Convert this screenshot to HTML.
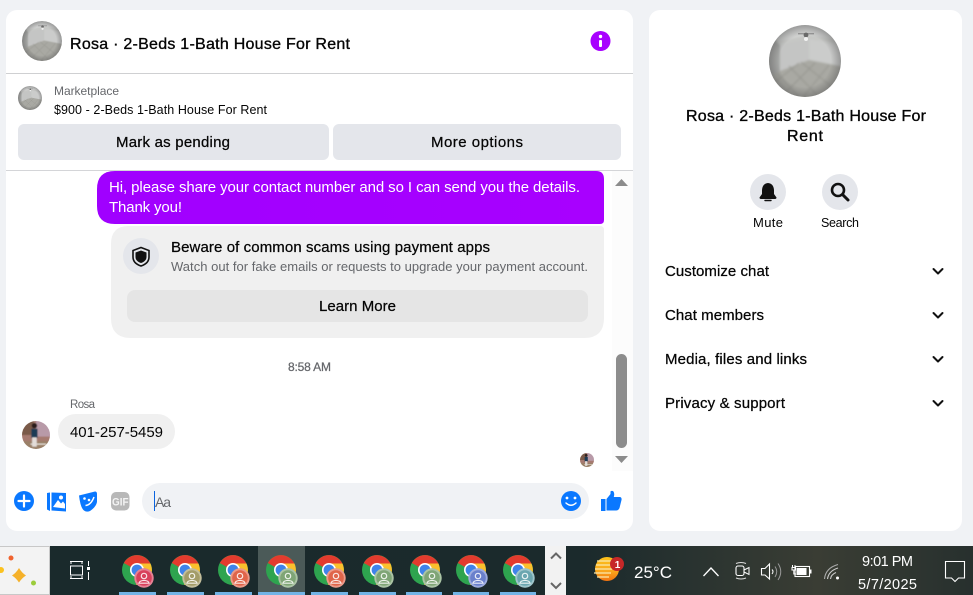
<!DOCTYPE html>
<html><head><meta charset="utf-8"><style>
html,body{margin:0;padding:0;background:#f0f2f5;width:973px;height:595px;overflow:hidden}
svg{display:block}
text{font-family:"Liberation Sans",sans-serif;fill:#050505}
.b{stroke:#050505;stroke-width:.35}
.m{stroke:#050505;stroke-width:.25}
.g{fill:#65676b}
</style></head><body>
<svg width="973" height="595" viewBox="0 0 973 595" xmlns="http://www.w3.org/2000/svg">
<defs>
<linearGradient id="bg" x1="0" x2="1" y1="0" y2="0"><stop offset="0" stop-color="#1a2a2c"/><stop offset=".6" stop-color="#1b2a2c"/><stop offset=".84" stop-color="#3a3d34"/><stop offset="1" stop-color="#27302e"/></linearGradient>
<linearGradient id="pur" x1="0" x2="1" y1="0" y2="0"><stop offset="0" stop-color="#a000ff"/><stop offset="1" stop-color="#a800ff"/></linearGradient>
<linearGradient id="sun" x1="0" x2="0" y1="0" y2="1"><stop offset="0" stop-color="#fcc21b"/><stop offset=".6" stop-color="#f9a61c"/><stop offset="1" stop-color="#f2730f"/></linearGradient>
<radialGradient id="vig"><stop offset=".72" stop-color="#555" stop-opacity="0"/><stop offset="1" stop-color="#555" stop-opacity=".45"/></radialGradient>
<clipPath id="c"><circle cx="36" cy="36" r="36"/></clipPath>
<filter id="s" x="-10%" y="-10%" width="120%" height="120%"><feGaussianBlur stdDeviation="1.100"/></filter>
<symbol id="room" viewBox="0 0 72 72"><g clip-path="url(#c)"><g filter="url(#s)">
<rect x="-4" y="-4" width="80" height="80" fill="#c6c7c5"/>
<polygon points="-4,-4 76,-4 76,16 40,10 10,16 -4,6" fill="#d2d3d2"/>
<polygon points="-4,6 11,20 11,46 -4,54" fill="#a6a7a5"/>
<polygon points="11,20 40,14 40,35 11,46" fill="#c4c5c4"/>
<polygon points="40,14 76,20 76,42 40,35" fill="#cbcccb"/>
<polygon points="-4,54 11,46 40,35 76,42 76,76 -4,76" fill="#a9a9a3"/>
<path d="M20 41L50 72M32 37L68 66M8 48L30 72M46 38L12 72M60 40L34 72M30 38L0 62" stroke="#95958f" stroke-width=".9" fill="none"/>
</g>
<rect x="29" y="8" width="16" height="1.400" fill="#999"/><circle cx="37" cy="10" r="2.400" fill="#6a6a6a"/><circle cx="37" cy="14" r="2" fill="#f2f2f2"/>
<circle cx="36" cy="36" r="36" fill="url(#vig)"/></g></symbol>
<symbol id="person" viewBox="0 0 72 72"><g clip-path="url(#c)"><g filter="url(#s)">
<rect x="-4" y="-4" width="80" height="80" fill="#a67a70"/>
<rect x="36" y="-4" width="40" height="44" fill="#b89aa8"/>
<rect x="-4" y="-4" width="34" height="40" fill="#7a5a48"/>
<rect x="-4" y="52" width="80" height="24" fill="#9a8068"/>
<rect x="22" y="58" width="40" height="3" fill="#e8e2dc"/>
<rect x="24" y="20" width="16" height="24" fill="#1f3a55"/>
<rect x="26" y="42" width="12" height="24" fill="#e2dcd8"/>
<circle cx="32" cy="12" r="7" fill="#2a1f1a"/>
</g></g></symbol>
<symbol id="chrome" viewBox="-15 -15 30 30">
<circle r="15" fill="#2ea44f"/>
<path d="M-13.200-7A15 15 0 0 1 13.400-6.500L0-6.500A7 7 0 0 0-6-3Z" fill="#e33b2e"/>
<path d="M13.400-6.500A15 15 0 0 1-1 15L5.500 3A7 7 0 0 0 0-6.500Z" fill="#fbc02d"/>
<circle r="7" fill="#fff"/><circle r="5.400" fill="#3f83ea"/>
</symbol>
<symbol id="badge" viewBox="-10 -10 20 20">
<circle r="9.700" fill="currentColor"/><circle r="9.700" fill="#fff" opacity=".35"/><circle r="7.800" fill="currentColor"/>
<circle cy="-2" r="2.700" fill="none" stroke="#fff" stroke-opacity=".85" stroke-width="1.200"/>
<path d="M-5 5.200C-4.500 1.500 4.500 1.500 5 5.200Z" fill="none" stroke="#fff" stroke-opacity=".85" stroke-width="1.200"/>
</symbol>
</defs>

<rect width="973" height="595" fill="#f0f2f5"/>
<rect x="6" y="10" width="627" height="521" rx="11" fill="#fff"/>
<rect x="649" y="10" width="313" height="521" rx="11" fill="#fff"/>

<!-- header -->
<use href="#room" x="22" y="21" width="40" height="40"/>
<text x="70" y="49" font-size="16" class="b" textLength="280">Rosa · 2-Beds 1-Bath House For Rent</text>
<circle cx="600.500" cy="41" r="10" fill="#a800ff"/>
<rect x="599" y="40" width="3" height="7" rx="1" fill="#fff"/><circle cx="600.500" cy="36.500" r="1.700" fill="#fff"/>
<rect x="6" y="73" width="627" height="1" fill="#cfd0d2"/>

<use href="#room" x="18" y="86" width="24" height="24"/>
<text x="54" y="95" font-size="12" class="g" textLength="65">Marketplace</text>
<text x="54" y="114" font-size="12.500" textLength="213">$900 - 2-Beds 1-Bath House For Rent</text>
<rect x="18" y="124" width="311" height="36" rx="6" fill="#e4e6eb"/>
<rect x="333" y="124" width="288" height="36" rx="6" fill="#e4e6eb"/>
<text x="116" y="147" font-size="15" class="m" textLength="114">Mark as pending</text>
<text x="431" y="147" font-size="15" class="m" textLength="92">More options</text>
<rect x="6" y="170" width="627" height="1" fill="#d4d5d8"/>

<!-- thread -->
<rect x="612" y="171" width="21" height="300" fill="#fcfcfc"/>
<path d="M97 189Q97 171 115 171H596Q604 171 604 179V220Q604 224 600 224H115Q97 224 97 206Z" fill="url(#pur)"/>
<text x="109" y="192" font-size="15" style="fill:#fff" textLength="471">Hi, please share your contact number and so I can send you the details.</text>
<text x="109" y="212" font-size="15" style="fill:#fff" textLength="73">Thank you!</text>
<path d="M111 244Q111 226 129 226H600Q604 226 604 230V318Q604 338 584 338H131Q111 338 111 318Z" fill="#f0f0f0"/>
<circle cx="141" cy="256" r="18" fill="#e4e6eb"/>
<path d="M141 247.500L149 250.500V257C149 261.500 145.500 264.500 141 266C136.500 264.500 133 261.500 133 257V250.500Z" fill="none" stroke="#111" stroke-width="1.600"/>
<path d="M141 250.500L146.500 252.500V257C146.500 260 144 262 141 263C138 262 135.500 260 135.500 257V252.500Z" fill="#111"/>
<text x="171" y="252" font-size="15" class="m" textLength="319">Beware of common scams using payment apps</text>
<text x="171" y="271" font-size="13" class="g" textLength="417">Watch out for fake emails or requests to upgrade your payment account.</text>
<rect x="127" y="290" width="461" height="32" rx="8" fill="#e5e5e5"/>
<text x="319" y="311" font-size="15" class="m" textLength="77">Learn More</text>
<text x="288" y="371" font-size="12" class="g" style="stroke:#65676b;stroke-width:.25" textLength="43">8:58 AM</text>
<text x="70" y="408" font-size="11.500" class="g" textLength="25">Rosa</text>
<use href="#person" x="22" y="421" width="28" height="28"/>
<rect x="58" y="414" width="117" height="35" rx="17.500" fill="#f0f0f0"/>
<text x="70" y="437" font-size="15" textLength="93">401-257-5459</text>
<use href="#person" x="580" y="453" width="14" height="14"/>
<polygon points="615,186 628,186 621.500,179" fill="#8c8c8c"/>
<rect x="616" y="354" width="11" height="94" rx="5.500" fill="#8c8c8c"/>
<polygon points="615,456 628,456 621.500,463" fill="#8c8c8c"/>

<!-- composer -->
<circle cx="24" cy="501" r="10" fill="#0a78ff"/>
<path d="M18.500 501H29.500M24 495.500V506.500" stroke="#fff" stroke-width="2.200" stroke-linecap="round"/>
<path d="M47 493L50 492.500V511L47 509.500Z" fill="#0a78ff"/>
<path d="M51.500 492.500L66 493V511.500L51.500 510.500Z" fill="#0a78ff"/>
<circle cx="61" cy="497.500" r="2" fill="#fff"/>
<path d="M53 507L58 500L61 503.500L63 501.500L65 504V508.500Z" fill="#fff"/>
<path d="M79 495.500L95 491.500Q97 491.500 97 494V502Q96 507 90 511Q86.500 512.500 84 510.500Q80.500 508 79 495.500Z" fill="#0a78ff"/>
<circle cx="84.500" cy="498.500" r="1.300" fill="#fff"/><circle cx="89" cy="500" r="1.300" fill="#fff"/>
<path d="M85.500 505.500Q91 505 94 497" stroke="#fff" stroke-width="1.500" fill="none"/>
<rect x="111" y="492" width="18.500" height="18.500" rx="5" fill="#b8b8b8"/>
<text x="112" y="505.500" font-size="11" font-weight="bold" style="fill:#f4f4f4" textLength="16.500" lengthAdjust="spacingAndGlyphs">GIF</text>
<rect x="142" y="483" width="447" height="36" rx="18" fill="#f0f2f5"/>
<rect x="154" y="491" width="1" height="20" fill="#0a64e0"/>
<text x="155" y="507" font-size="14" class="g" textLength="16">Aa</text>
<circle cx="571" cy="501" r="10" fill="#0a78ff"/>
<circle cx="567" cy="498" r="1.400" fill="#fff"/><circle cx="575" cy="498" r="1.400" fill="#fff"/>
<path d="M566 503Q571 507.500 576 503" stroke="#fff" stroke-width="1.500" fill="none" stroke-linecap="round"/>
<rect x="601" y="499" width="4.500" height="12" fill="#0a78ff"/>
<path d="M606.500 499L610.500 494V491.500Q611 490.500 613 491Q615 492.500 613.800 497H620Q622 497.500 621.500 500L619.500 508Q618.500 510.500 616 510.500H606.500Z" fill="#0a78ff"/>

<!-- right panel -->
<use href="#room" x="769" y="25" width="72" height="72"/>
<text x="686" y="121" font-size="16" class="b" textLength="240">Rosa · 2-Beds 1-Bath House For</text>
<text x="787" y="141" font-size="16" class="b" textLength="36">Rent</text>
<circle cx="768" cy="192" r="18" fill="#e4e6eb"/><circle cx="840" cy="192" r="18" fill="#e4e6eb"/>
<path d="M768 183Q773.500 183.500 774 190V194L776.500 197.500Q776.500 199 775 199H761Q759.500 199 759.500 197.500L762 194V190Q762.500 183.500 768 183Z" fill="#111"/>
<path d="M765 200.500H771" stroke="#111" stroke-width="1.400" stroke-linecap="round"/>
<circle cx="838" cy="190" r="6" fill="none" stroke="#111" stroke-width="2.600"/>
<path d="M842.500 194.500L848 200" stroke="#111" stroke-width="3" stroke-linecap="round"/>
<text x="753" y="227" font-size="13" textLength="30">Mute</text>
<text x="821" y="227" font-size="12.500" textLength="38">Search</text>
<text x="665" y="276" font-size="15" class="m" textLength="104">Customize chat</text>
<text x="665" y="320" font-size="15" class="m" textLength="99">Chat members</text>
<text x="665" y="364" font-size="15" class="m" textLength="142">Media, files and links</text>
<text x="665" y="408" font-size="15" class="m" textLength="120">Privacy &amp; support</text>
<g fill="none" stroke="#111" stroke-width="2" stroke-linecap="round" stroke-linejoin="round">
<path d="M933.500 269L938 273.500L942.500 269"/>
<path d="M933.500 313L938 317.500L942.500 313"/>
<path d="M933.500 357L938 361.500L942.500 357"/>
<path d="M933.500 401L938 405.500L942.500 401"/>
</g>

<!-- taskbar -->
<rect y="546" width="973" height="49" fill="url(#bg)"/>
<rect y="546" width="50" height="49" fill="#f3f3f3"/>
<rect y="546" width="50" height="1" fill="#c8c8c8"/><rect y="594" width="50" height="1" fill="#c8c8c8"/><rect x="49" y="546" width="1" height="49" fill="#c8c8c8"/>
<circle cx="11" cy="558" r="2.500" fill="#f0632e"/>
<circle cx="1" cy="570" r="3" fill="#fbc21f"/>
<circle cx="33.500" cy="583" r="2.500" fill="#9ccc3c"/>
<path d="M19 568Q22 573 26 575.500Q22 578 19 582.500Q16 578 12 575.500Q16 573 19 568Z" fill="#f5b12a"/>
<path d="M70 561.500H83M70 578.500H83" stroke="#fff" stroke-width="1" fill="none"/>
<path d="M71 561.500V564M82 561.500V564M71 578.500V576M82 578.500V576" stroke="#fff" stroke-width="1" fill="none"/>
<rect x="70.500" y="566" width="12" height="9" fill="none" stroke="#fff" stroke-width="1"/>
<path d="M88.500 561V566M88.500 572V580" stroke="#fff" stroke-width="1"/><rect x="87" y="567" width="3" height="3" fill="#fff"/>
<rect x="258" y="546" width="47" height="46" fill="#4b5a58"/>
<g fill="#72b4e6">
<rect x="119" y="592" width="37" height="3"/><rect x="167" y="592" width="37" height="3"/><rect x="215" y="592" width="37" height="3"/><rect x="258" y="592" width="47" height="3"/><rect x="311" y="592" width="37" height="3"/><rect x="359" y="592" width="37" height="3"/><rect x="406" y="592" width="36" height="3"/><rect x="453" y="592" width="36" height="3"/><rect x="500" y="592" width="36" height="3"/>
</g>
<use href="#chrome" x="122" y="555" width="30" height="30"/><use href="#badge" x="134" y="568" width="20" height="20" color="#d8405c"/>
<use href="#chrome" x="170" y="555" width="30" height="30"/><use href="#badge" x="182" y="568" width="20" height="20" color="#a39c68"/>
<use href="#chrome" x="218" y="555" width="30" height="30"/><use href="#badge" x="230" y="568" width="20" height="20" color="#e0654a"/>
<use href="#chrome" x="266" y="555" width="30" height="30"/><use href="#badge" x="278" y="568" width="20" height="20" color="#7fa576"/>
<use href="#chrome" x="314" y="555" width="30" height="30"/><use href="#badge" x="326" y="568" width="20" height="20" color="#e0654a"/>
<use href="#chrome" x="362" y="555" width="30" height="30"/><use href="#badge" x="374" y="568" width="20" height="20" color="#7fa576"/>
<use href="#chrome" x="410" y="555" width="30" height="30"/><use href="#badge" x="422" y="568" width="20" height="20" color="#7fa576"/>
<use href="#chrome" x="456" y="555" width="30" height="30"/><use href="#badge" x="468" y="568" width="20" height="20" color="#6a80cc"/>
<use href="#chrome" x="503" y="555" width="30" height="30"/><use href="#badge" x="515" y="568" width="20" height="20" color="#6ba6b0"/>
<rect x="545" y="546" width="21" height="49" fill="#f2f2f2"/>
<path d="M551 558.500L556 553.500L561 558.500M551 583L556 588L561 583" stroke="#666" stroke-width="2" fill="none"/>

<circle cx="607" cy="569" r="12" fill="url(#sun)"/>
<path d="M597 561H612M596 565H612M595 569H612M594 573H611M597 577H609" stroke="#fae9ad" stroke-width="1.300"/>
<circle cx="617" cy="564" r="7" fill="#c62828"/>
<text x="614.800" y="568" font-size="10" font-weight="bold" style="fill:#fff">1</text>
<text x="634" y="578" font-size="17" style="fill:#fff" textLength="38">25°C</text>
<path d="M703.500 576L711 568L718.500 576" stroke="#fff" stroke-width="1.300" fill="none"/>
<rect x="736" y="566" width="8" height="9.500" rx="2" fill="none" stroke="#fff" stroke-width="1.100"/>
<path d="M744 570L749 567.500V574.500L744 572" fill="none" stroke="#fff" stroke-width="1"/>
<path d="M736 563.500Q741 561.500 746 563.500M736 578Q741 580 746 578" stroke="#ddd" stroke-width="1" fill="none"/>
<path d="M761.500 568.500H765L769.500 564V579L765 575H761.500Z" fill="none" stroke="#fff" stroke-width="1.100"/>
<path d="M772 569.500Q774 571.500 772 574" stroke="#fff" stroke-width="1" fill="none"/>
<path d="M775 566.500Q778.500 571.500 775 577M778 563.500Q783.500 571.500 778 580" stroke="#999" stroke-width="1" fill="none"/>
<rect x="795" y="566.500" width="14.500" height="10" fill="none" stroke="#fff" stroke-width="1.100"/>
<rect x="796.500" y="568" width="10" height="7" fill="#fff"/>
<rect x="810" y="569.500" width="1.500" height="4" fill="#fff"/>
<path d="M792.500 565V567M795 565V567M792 567.500H795.500V570H792ZM793.800 570V574H796" stroke="#fff" stroke-width="1" fill="none"/>
<path d="M824.500 579Q825.500 568 838 564.500" stroke="#aaa" stroke-width="1.100" fill="none"/>
<path d="M827.500 579Q828.500 571 838 568M830.500 579Q831 574.500 836 572.500" stroke="#ccc" stroke-width="1.100" fill="none"/>
<circle cx="837.500" cy="578" r="1.500" fill="#fff"/>
<text x="862" y="566" font-size="14.500" style="fill:#fff" textLength="51">9:01 PM</text>
<text x="858" y="589" font-size="14.500" style="fill:#fff" textLength="59">5/7/2025</text>
<path d="M945.500 561.500H964.500V578H958.500L955 581.500L951.500 578H945.500Z" fill="none" stroke="#fff" stroke-width="1.100"/>
</svg>
</body></html>
